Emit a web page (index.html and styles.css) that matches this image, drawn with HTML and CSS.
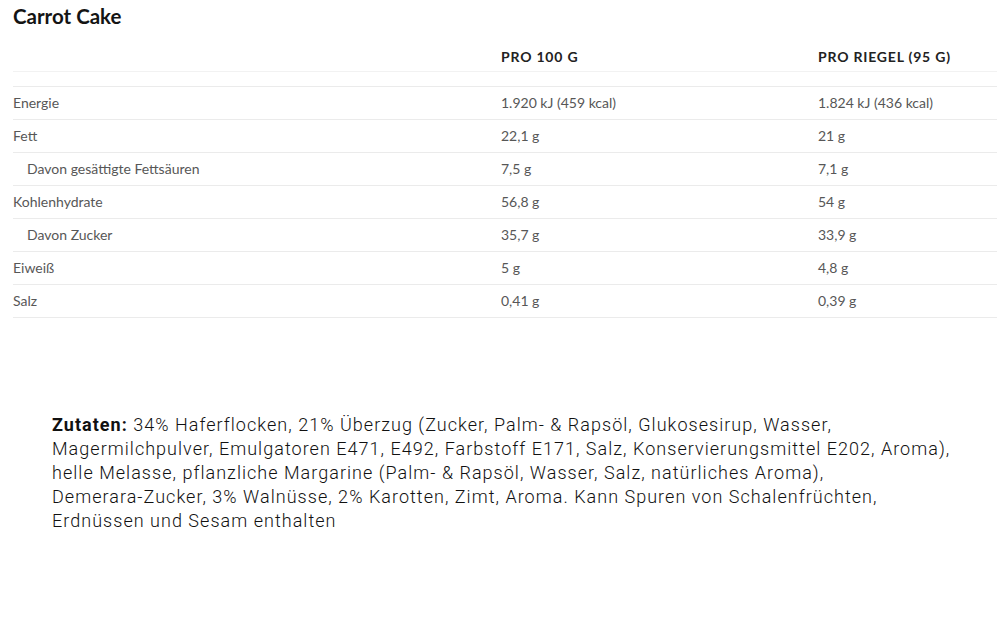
FILE: index.html
```html
<!DOCTYPE html>
<html lang="de">
<head>
<meta charset="utf-8">
<title>Carrot Cake</title>
<link rel="stylesheet" href="styles.css">
</head>
<body>
<section class="nutrition">
  <h1 class="title">Carrot Cake</h1>
  <table class="facts">
    <colgroup>
      <col class="c-name">
      <col class="c-100">
      <col class="c-bar">
    </colgroup>
    <thead>
      <tr>
        <th></th>
        <th>PRO 100 G</th>
        <th>PRO RIEGEL (95 G)</th>
      </tr>
      <tr class="spacer"><td></td><td></td><td></td></tr>
    </thead>
    <tbody>
      <tr><td>Energie</td><td>1.920 kJ (459 kcal)</td><td>1.824 kJ (436 kcal)</td></tr>
      <tr><td>Fett</td><td>22,1 g</td><td>21 g</td></tr>
      <tr><td class="sub">Davon gesättigte Fettsäuren</td><td>7,5 g</td><td>7,1 g</td></tr>
      <tr><td>Kohlenhydrate</td><td>56,8 g</td><td>54 g</td></tr>
      <tr><td class="sub">Davon Zucker</td><td>35,7 g</td><td>33,9 g</td></tr>
      <tr><td>Eiweiß</td><td>5 g</td><td>4,8 g</td></tr>
      <tr><td>Salz</td><td>0,41 g</td><td>0,39 g</td></tr>
    </tbody>
  </table>
</section>
<section class="ingredients">
  <p><strong>Zutaten:</strong> 34% Haferflocken, 21% Überzug (Zucker, Palm- &amp; Rapsöl, Glukosesirup, Wasser, Magermilchpulver, Emulgatoren E471, E492, Farbstoff E171, Salz, Konservierungsmittel E202, Aroma), helle Melasse, pflanzliche Margarine (Palm- &amp; Rapsöl, Wasser, Salz, natürliches Aroma), <span class="nowrap">Demerara-Zucker,</span> 3% Walnüsse, 2% Karotten, Zimt, Aroma. Kann Spuren von Schalenfrüchten, Erdnüssen und Sesam enthalten</p>
</section>
</body>
</html>
```
FILE: styles.css
```css
html, body {
  margin: 0;
  padding: 0;
  background: #ffffff;
}

body {
  font-family: Lato, "Liberation Sans", sans-serif;
  width: 997px;
  overflow-x: hidden;
}

.nutrition {
  padding: 3px 0 0 13px;
}

.title {
  margin: 0;
  font-family: Lato, sans-serif;
  font-weight: 700;
  font-size: 20.5px;
  line-height: 26px;
  color: #141414;
}

.facts {
  margin-top: 11px;
  width: 984px;
  border-collapse: separate;
  border-spacing: 0;
  table-layout: fixed;
}

.c-name { width: 488px; }
.c-100 { width: 317px; }
.c-bar { width: 179px; }

.facts th {
  text-align: left;
  font-weight: 700;
  font-size: 14px;
  letter-spacing: 0.8px;
  line-height: 20px;
  color: #222222;
  padding: 7px 0 4px 0;
  border-bottom: 1px solid #f2f2f2;
}

.facts .spacer td {
  height: 14px;
  padding: 0;
  border-bottom: 1px solid #ebebeb;
}

.facts tbody td {
  font-size: 14px;
  line-height: 20px;
  color: #575757;
  padding: 6px 0;
  border-bottom: 1px solid #ebebeb;
  white-space: nowrap;
}

.facts tbody td.sub {
  padding-left: 14px;
}

.ingredients {
  padding: 0 33px 0 52px;
  margin-top: 95px;
}

.ingredients p {
  margin: 0;
  font-family: Roboto, "Liberation Sans", sans-serif;
  font-weight: 300;
  font-size: 18px;
  letter-spacing: 1.03px;
  line-height: 24px;
  color: #111111;
}

.ingredients strong {
  font-weight: 700;
}

.nowrap {
  white-space: nowrap;
}
```
